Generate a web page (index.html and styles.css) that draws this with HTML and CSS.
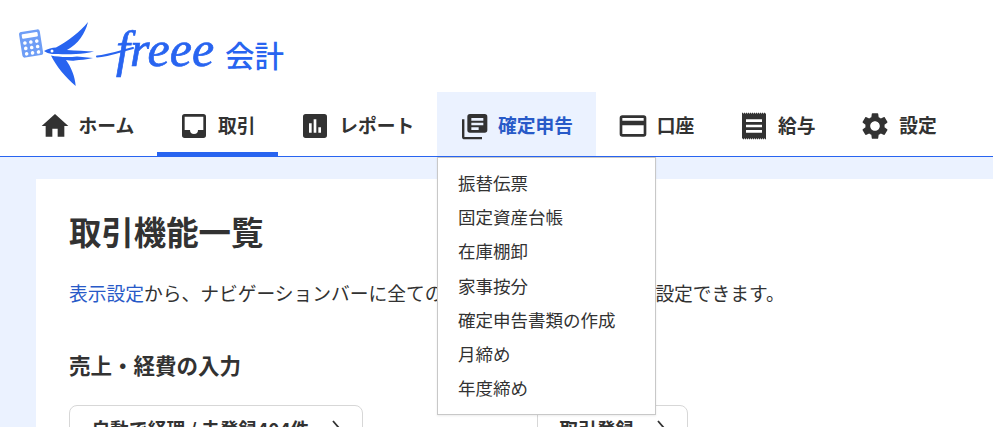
FILE: index.html
```html
<!DOCTYPE html>
<html lang="ja">
<head>
<meta charset="utf-8">
<title>取引機能一覧</title>
<link rel="stylesheet" href="styles.css">
</head>
<body>
<header class="header">
  <a class="logo" href="#">
    <svg class="logo-mark" viewBox="0 0 215 70" width="215" height="70">
      <g transform="translate(-17 -20)">
        <rect class="calc" x="20.5" y="30.5" width="21" height="26" rx="2.5" transform="rotate(-9 31 43)"/>
        <g class="calc-keys" transform="rotate(-9 31 43)">
          <rect x="23" y="33" width="16" height="4.5" rx="1"/>
          <circle cx="25" cy="42" r="1.8"/><circle cx="31" cy="42" r="1.8"/><circle cx="37" cy="42" r="1.8"/>
          <circle cx="25" cy="47.5" r="1.8"/><circle cx="31" cy="47.5" r="1.8"/><circle cx="37" cy="47.5" r="1.8"/>
          <circle cx="25" cy="53" r="1.8"/><circle cx="31" cy="53" r="1.8"/><circle cx="37" cy="53" r="1.8"/>
        </g>
        <path class="bird" d="M44 51C48 49 52 47.5 56 47.5C68 41 80 32 88 22C85 34 78 44 67 50C76 50.5 86 51 94 51.5C88 53 82 54 76 54C66 54.5 57 54 52 54C49 53.5 46 52.5 44 51Z"/>
        <path class="bird" d="M51 55.500C58 57 68 57.500 77 56.500L93 58C86 59.500 80 60 75 60.500C72 61 69 60.500 66 60C71 67 75 76 75.700 86C66 78 56 66 51 55.500Z"/>
        <circle class="eye" cx="52" cy="51" r="1.500"/>
        <path class="flourish" d="M97 56.500C107 56 115 53 133 48"/>
        <text class="logo-word" x="116" y="66">freee</text>
      </g>
    </svg>
    <span class="logo-product">会計</span>
  </a>
  <nav>
    <ul class="nav">
      <li class="nav-item">
        <svg class="nav-icon" viewBox="0 0 24 24"><path d="M10 20v-6h4v6h5v-8h3L12 3 2 12h3v8z"/></svg>
        <span class="nav-label">ホーム</span>
      </li>
      <li class="nav-item is-current">
        <svg class="nav-icon" viewBox="0 0 24 24"><path fill-rule="evenodd" d="M5 3h14a2 2 0 0 1 2 2v14a2 2 0 0 1-2 2H5a2 2 0 0 1-2-2V5a2 2 0 0 1 2-2zm0 2v10h4a3 3 0 0 0 6 0h4V5z"/></svg>
        <span class="nav-label">取引</span>
      </li>
      <li class="nav-item">
        <svg class="nav-icon" viewBox="0 0 24 24"><path fill-rule="evenodd" d="M5 3h14a2 2 0 0 1 2 2v14a2 2 0 0 1-2 2H5a2 2 0 0 1-2-2V5a2 2 0 0 1 2-2zm2.500 7v7h2v-7zm3.500-3v10h2V7zm3.500 6v4h2v-4z"/></svg>
        <span class="nav-label">レポート</span>
      </li>
      <li class="nav-item is-open">
        <svg class="nav-icon" viewBox="0 0 24 24"><path fill-rule="evenodd" d="M9 3h11a2 2 0 0 1 2 2v10a2 2 0 0 1-2 2H9a2 2 0 0 1-2-2V5a2 2 0 0 1 2-2zm1 3v2h9V6zm0 3.500v2h9v-2zm0 3.500v2h5.500v-2z"/><path d="M3 7h1.800v13.200H18V22H5a2 2 0 0 1-2-2z"/></svg>
        <span class="nav-label">確定申告</span>
        <ul class="menu">
          <li>振替伝票</li>
          <li>固定資産台帳</li>
          <li>在庫棚卸</li>
          <li>家事按分</li>
          <li>確定申告書類の作成</li>
          <li>月締め</li>
          <li>年度締め</li>
        </ul>
      </li>
      <li class="nav-item">
        <svg class="nav-icon" viewBox="0 0 24 24"><path fill-rule="evenodd" d="M4 4h16a2 2 0 0 1 2 2v12a2 2 0 0 1-2 2H4a2 2 0 0 1-2-2V6a2 2 0 0 1 2-2zm0 2v2h16V6zm0 5.500V18h16v-6.500z"/></svg>
        <span class="nav-label">口座</span>
      </li>
      <li class="nav-item">
        <svg class="nav-icon" viewBox="0 0 24 24"><path fill-rule="evenodd" d="M3 2h.750v.600h.750V2h.750v.600H6V2h.750v.600H7.500V2h.750v.600H9V2h.750v.600h.750V2h.750v.600H12V2h.750v.600h.750V2h.750v.600H15V2h.750v.600h.750V2h.750v.600H18V2h.750v.600h.750V2h.750v.600H21V22h-.750v-.600h-.750V22h-.750v-.600H18V22h-.750v-.600h-.750V22h-.750v-.600H15V22h-.750v-.600h-.750V22h-.750v-.600H12V22h-.750v-.600h-.750V22h-.750v-.600H9V22h-.750v-.600H7.500V22h-.750v-.600H6V22h-.750v-.600H4.500V22h-.750v-.600H3zm3 5v2h12V7zm0 4v2h12v-2zm0 4v2h12v-2z"/></svg>
        <span class="nav-label">給与</span>
      </li>
      <li class="nav-item">
        <svg class="nav-icon" viewBox="0 0 24 24"><path d="M19.140 12.940c.04-.3.06-.61.06-.94 0-.32-.02-.64-.07-.94l2.030-1.580c.18-.14.23-.41.12-.61l-1.920-3.320c-.12-.22-.37-.29-.59-.22l-2.390.96c-.5-.38-1.030-.7-1.620-.94l-.36-2.540c-.04-.24-.24-.41-.48-.41h-3.840c-.24 0-.43.17-.47.41l-.36 2.540c-.59.24-1.130.57-1.620.94l-2.390-.96c-.22-.08-.47 0-.59.22L2.740 8.870c-.12.21-.08.47.12.61l2.030 1.580c-.05.3-.09.63-.09.94s.02.64.07.94l-2.030 1.580c-.18.14-.23.41-.12.61l1.920 3.320c.12.22.37.29.59.22l2.390-.96c.5.38 1.030.7 1.620.94l.36 2.540c.05.24.24.41.48.41h3.840c.24 0 .44-.17.47-.41l.36-2.540c.59-.24 1.130-.56 1.620-.94l2.390.96c.22.08.47 0 .59-.22l1.920-3.320c.12-.22.07-.47-.12-.61l-2.010-1.580zM12 15.600c-1.980 0-3.600-1.620-3.600-3.600s1.620-3.600 3.600-3.600 3.600 1.620 3.600 3.600-1.620 3.600-3.600 3.600z"/></svg>
        <span class="nav-label">設定</span>
      </li>
    </ul>
  </nav>
</header>
<main class="main">
  <section class="card">
    <h1 class="title">取引機能一覧</h1>
    <p class="lead"><a class="link" href="#">表示設定</a>から、ナビゲーションバーに全ての<span class="lead-covered">機能を表示させるように</span>設定できます。</p>
    <h2 class="subtitle">売上・経費の入力</h2>
    <div class="actions">
      <a class="action" href="#">自動で経理 / 未登録404件
        <svg class="chevron" viewBox="0 0 8 16"><path d="M1 1l6 7-6 7"/></svg>
      </a>
      <a class="action action-far" href="#">取引登録
        <svg class="chevron" viewBox="0 0 8 16"><path d="M1 1l6 7-6 7"/></svg>
      </a>
    </div>
  </section>
</main>
</body>
</html>
```

FILE: styles.css
```css
* { box-sizing: border-box; }
html, body {
  margin: 0;
  height: 100%;
  overflow: hidden;
}
body {
  display: flex;
  flex-direction: column;
  background: #ebf2ff;
  color: #323232;
  font-family: "Noto Sans CJK JP", "Noto Sans", sans-serif;
  font-size: 18.75px;
}
a { color: inherit; text-decoration: none; }
ul { list-style: none; margin: 0; padding: 0; }

.header {
  background: #fff;
  border-bottom: 1px solid #2864f0;
  height: 157px;
  position: relative;
  z-index: 2;
}
.logo {
  display: flex;
  align-items: center;
  height: 92px;
  padding: 20px 0 2px 17px;
}
.logo-mark { display: block; flex: none; }
.calc { fill: #6f9ef6; }
.calc-keys { fill: #fff; }
.bird { fill: #2864f0; }
.eye { fill: #fff; }
.flourish { fill: none; stroke: #2864f0; stroke-width: 2; stroke-linecap: round; }
.logo-word {
  fill: #2864f0;
  stroke: #2864f0;
  stroke-width: .7px;
  font-family: "Liberation Serif", serif;
  font-style: italic;
  font-size: 50px;
}
.logo-product {
  margin-left: -7px;
  color: #2864f0;
  font-size: 29.5px;
  font-weight: 500;
  line-height: 1;
}

.nav {
  display: flex;
  padding-left: 17.500px;
}
.nav-item {
  position: relative;
  display: flex;
  align-items: center;
  gap: 8px;
  height: 64px;
  padding: 8px 22.750px 0 21px;
  border-bottom: 4px solid transparent;
  font-weight: 700;
  line-height: 1;
  white-space: nowrap;
}
.nav-label { margin-bottom: 2px; }
.nav-icon { width: 32px; height: 32px; fill: #323232; flex: none; }
.is-current { border-bottom-color: #2864f0; }
.is-open { background: #ebf2ff; color: #285ac8; }

.menu {
  position: absolute;
  left: 0;
  top: calc(100% + 5px);
  width: 219px;
  padding: 8px 0 9px 20px;
  background: #fff;
  border: 1px solid #c8c8c8;
  box-shadow: 0 1px 2px rgba(0, 0, 0, .08);
  color: #323232;
  font-size: 17.5px;
  font-weight: 400;
}
.menu li { height: 34.200px; line-height: 34.200px; }

.main {
  flex: 1;
  padding: 22px 0 0 36px;
}
.card {
  background: #fff;
  height: 400px;
  padding: 28px 33px 0;
}
.title {
  margin: 0 0 24px;
  font-size: 32.400px;
  font-weight: 700;
  line-height: 48px;
}
.lead {
  margin: 0 0 42px;
  line-height: 28px;
  white-space: nowrap;
}
.lead-covered { letter-spacing: .5px; }
.link { color: #285ac8; }
.subtitle {
  margin: 0 0 24px;
  font-size: 21.500px;
  font-weight: 700;
  line-height: 32px;
}
.actions { display: flex; }
.action {
  display: flex;
  align-items: center;
  gap: 23px;
  height: 46px;
  padding: 0 21.500px;
  border: 1px solid #d7d7d7;
  border-radius: 8px;
  font-weight: 700;
  white-space: nowrap;
}
.action-far { margin-left: 174px; }
.chevron {
  width: 8px;
  height: 16px;
  flex: none;
  fill: none;
  stroke: #323232;
  stroke-width: 1.800;
}
```
